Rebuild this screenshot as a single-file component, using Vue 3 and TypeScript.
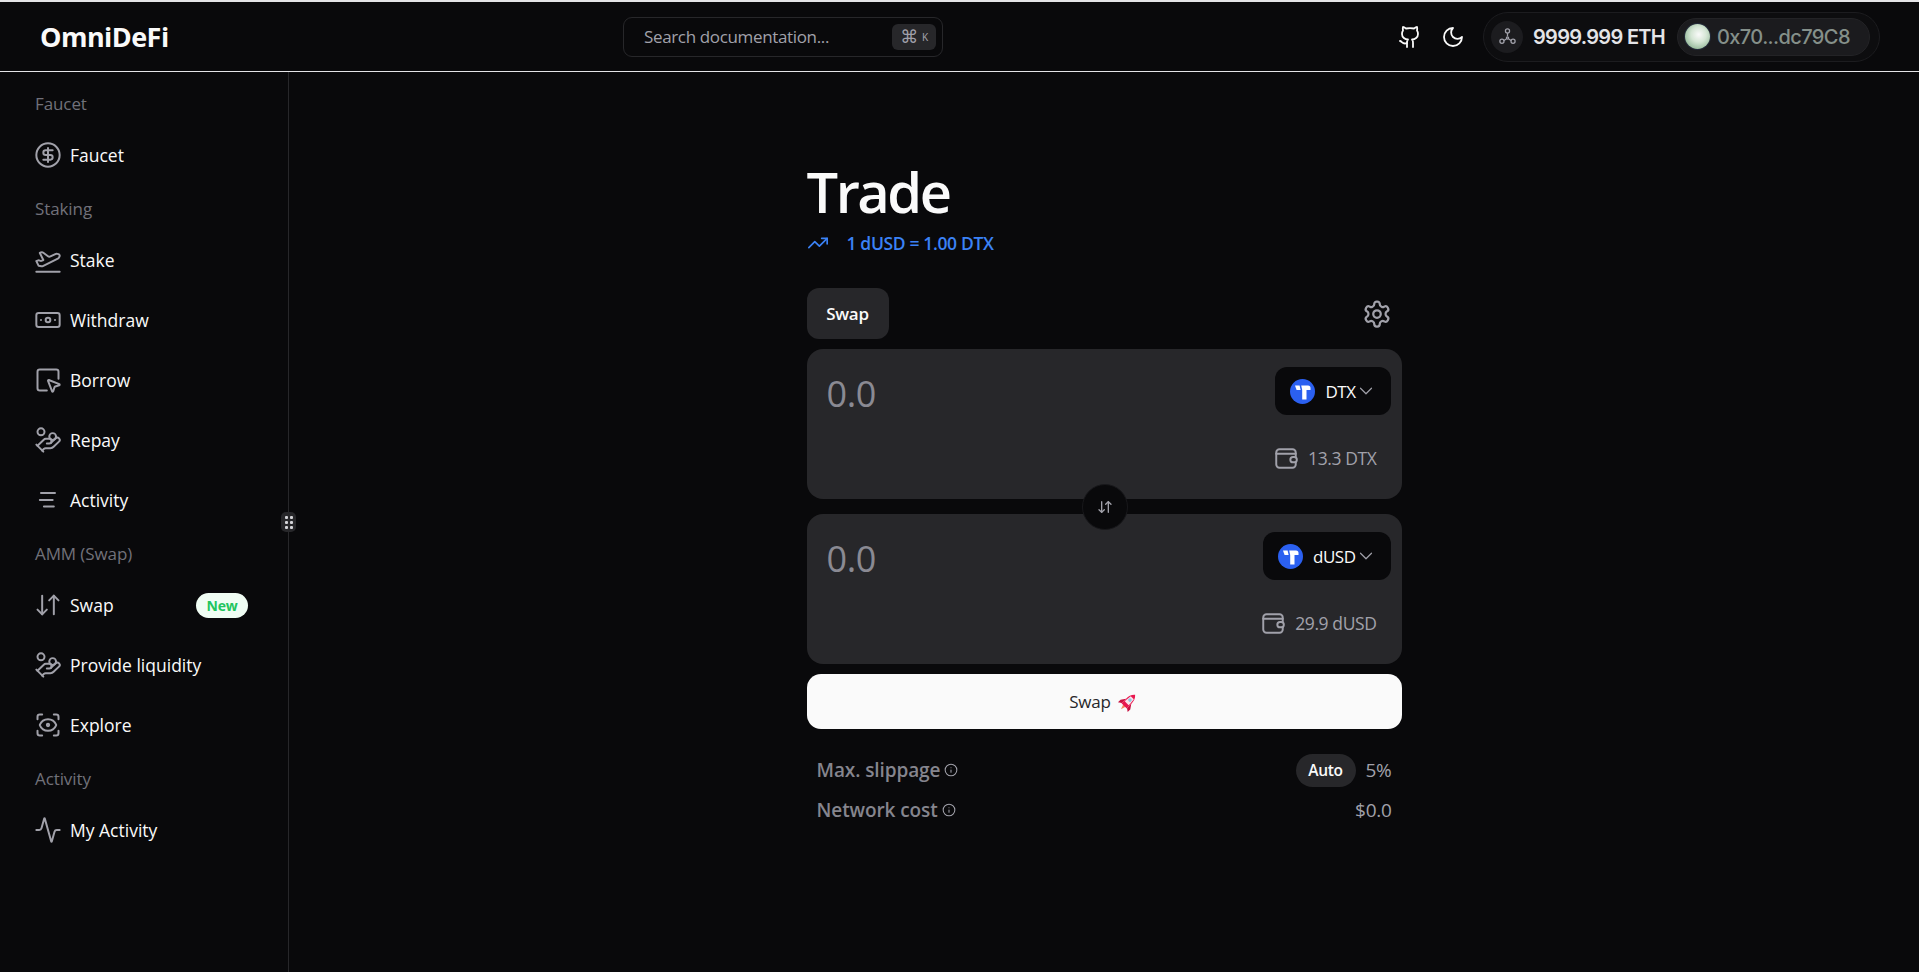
<script setup lang="ts">
type NavItem = { label: string; icon: string; badge?: string }
type NavGroup = { title: string; items: NavItem[] }

const groups: NavGroup[] = [
  { title: 'Faucet', items: [{ label: 'Faucet', icon: 'dollar' }] },
  {
    title: 'Staking',
    items: [
      { label: 'Stake', icon: 'plane' },
      { label: 'Withdraw', icon: 'note' },
      { label: 'Borrow', icon: 'pointer' },
      { label: 'Repay', icon: 'hand' },
      { label: 'Activity', icon: 'lines' },
    ],
  },
  {
    title: 'AMM (Swap)',
    items: [
      { label: 'Swap', icon: 'swap', badge: 'New' },
      { label: 'Provide liquidity', icon: 'hand' },
      { label: 'Explore', icon: 'eye' },
    ],
  },
  { title: 'Activity', items: [{ label: 'My Activity', icon: 'pulse' }] },
]

const tokens = [
  { symbol: 'DTX', balance: '13.3 DTX' },
  { symbol: 'dUSD', balance: '29.9 dUSD' },
]
</script>

<template>
  <div class="page">
    <header class="topbar">
      <div class="logo">OmniDeFi</div>
      <div class="search">
        <span>Search documentation...</span>
        <kbd class="kbd"><span class="cmd">⌘</span><span class="k">K</span></kbd>
      </div>
      <div class="top-right">
        <svg class="top-icon" viewBox="0 0 24 24">
          <path d="M15 22v-4a4.8 4.8 0 0 0-1-3.5c3 0 6-2 6-5.5.08-1.25-.27-2.48-1-3.5.28-1.15.28-2.35 0-3.5 0 0-1 0-3 1.5-2.64-.5-5.36-.5-8 0C6 2 5 2 5 2c-.3 1.15-.3 2.35 0 3.5A5.403 5.403 0 0 0 4 9c0 3.5 3 5.5 6 5.5-.39.49-.68 1.05-.85 1.65-.17.6-.22 1.23-.15 1.85v4" />
          <path d="M9 18c-4.51 2-5-2-7-2" />
        </svg>
        <svg class="top-icon moon" viewBox="0 0 24 24">
          <path d="M12 3a6 6 0 0 0 9 9 9 9 0 1 1-9-9Z" />
        </svg>
        <div class="wallet-pill">
          <span class="chain">
            <svg viewBox="0 0 24 24" class="chain-icon">
              <circle cx="12" cy="5" r="2.6" />
              <circle cx="5" cy="18" r="2.6" />
              <circle cx="19" cy="18" r="2.6" />
              <path d="M12 8v3M7.5 17l2.5-1.5M16.5 17l-2.5-1.5" />
              <circle cx="12" cy="14" r="1.4" />
            </svg>
          </span>
          <span class="eth">9999.999 ETH</span>
          <span class="account">
            <span class="avatar"></span>
            <span class="address">0x70...dc79C8</span>
          </span>
        </div>
      </div>
    </header>

    <div class="body">
      <aside class="sidebar">
        <template v-for="group in groups" :key="group.title">
          <div class="group-title">{{ group.title }}</div>
          <a v-for="item in group.items" :key="item.label" class="nav-item">
            <svg class="nav-icon" viewBox="0 0 24 24">
              <template v-if="item.icon === 'dollar'">
                <circle cx="12" cy="12" r="10" />
                <path d="M16 8h-6a2 2 0 1 0 0 4h4a2 2 0 1 1 0 4H8" />
                <path d="M12 18V6" />
              </template>
              <template v-else-if="item.icon === 'plane'">
                <path d="M2 22h20" />
                <path d="M6.36 17.4 4 17l-2-4 1.1-.55a2 2 0 0 1 1.8 0l.17.1a2 2 0 0 0 1.8 0L8 12 5 6l.9-.45a2 2 0 0 1 2.09.2l4.02 3a2 2 0 0 0 2.1.2l4.19-2.06a2.41 2.41 0 0 1 1.73-.17L21 7a1.4 1.4 0 0 1 .87 1.99l-.38.76c-.23.46-.6.84-1.07 1.08L7.58 17.2a2 2 0 0 1-1.22.18Z" />
              </template>
              <template v-else-if="item.icon === 'note'">
                <rect x="2" y="6" width="20" height="12" rx="2" />
                <circle cx="12" cy="12" r="2" />
                <path d="M6 12h.01M18 12h.01" />
              </template>
              <template v-else-if="item.icon === 'pointer'">
                <path d="M12.034 12.681a.498.498 0 0 1 .647-.647l9 3.5a.5.5 0 0 1-.033.943l-3.444 1.068a1 1 0 0 0-.66.66l-1.067 3.443a.5.5 0 0 1-.943.033z" />
                <path d="M21 11V5a2 2 0 0 0-2-2H5a2 2 0 0 0-2 2v14a2 2 0 0 0 2 2h6" />
              </template>
              <template v-else-if="item.icon === 'hand'">
                <path d="M11 15h2a2 2 0 1 0 0-4h-3c-.6 0-1.1.2-1.4.6L3 17" />
                <path d="m7 21 1.6-1.4c.3-.4.8-.6 1.4-.6h4c1.1 0 2.1-.4 2.8-1.2l4.6-4.4a2 2 0 0 0-2.75-2.91l-4.2 3.9" />
                <path d="m2 16 6 6" />
                <circle cx="16" cy="9" r="2.9" />
                <circle cx="6" cy="5" r="3" />
              </template>
              <template v-else-if="item.icon === 'lines'">
                <path d="M6 6h12M5 12h11M8.5 17.5H17" />
              </template>
              <template v-else-if="item.icon === 'swap'">
                <path d="m3 16 4 4 4-4" />
                <path d="M7 20V4" />
                <path d="m21 8-4-4-4 4" />
                <path d="M17 4v16" />
              </template>
              <template v-else-if="item.icon === 'eye'">
                <path d="M3 7V5a2 2 0 0 1 2-2h2" />
                <path d="M17 3h2a2 2 0 0 1 2 2v2" />
                <path d="M21 17v2a2 2 0 0 1-2 2h-2" />
                <path d="M7 21H5a2 2 0 0 1-2-2v-2" />
                <circle cx="12" cy="12" r="1" />
                <path d="M18.944 12.33a1 1 0 0 0 0-.66 7.5 7.5 0 0 0-13.888 0 1 1 0 0 0 0 .66 7.5 7.5 0 0 0 13.888 0" />
              </template>
              <template v-else>
                <path d="M22 12h-2.48a2 2 0 0 0-1.93 1.46l-2.35 8.36a.25.25 0 0 1-.48 0L9.24 2.18a.25.25 0 0 0-.48 0l-2.35 8.36A2 2 0 0 1 4.49 12H2" />
              </template>
            </svg>
            <span class="nav-label">{{ item.label }}</span>
            <span v-if="item.badge" class="badge">{{ item.badge }}</span>
          </a>
        </template>
        <span class="handle">
          <i></i><i></i><i></i><i></i><i></i><i></i>
        </span>
      </aside>

      <main class="main">
        <div class="trade">
          <h1 class="title">Trade</h1>
          <div class="rate">
            <svg class="rate-icon" viewBox="0 0 24 24">
              <path d="M22 7 13.5 15.5 8.5 10.5 2 17" />
              <path d="M16 7h6v6" />
            </svg>
            <span>1 dUSD = 1.00 DTX</span>
          </div>

          <div class="tabs">
            <button class="tab">Swap</button>
            <svg class="gear" viewBox="0 0 24 24">
              <path d="M12.22 2h-.44a2 2 0 0 0-2 2v.18a2 2 0 0 1-1 1.73l-.43.25a2 2 0 0 1-2 0l-.15-.08a2 2 0 0 0-2.73.73l-.22.38a2 2 0 0 0 .73 2.73l.15.1a2 2 0 0 1 1 1.72v.51a2 2 0 0 1-1 1.74l-.15.09a2 2 0 0 0-.73 2.73l.22.38a2 2 0 0 0 2.73.73l.15-.08a2 2 0 0 1 2 0l.43.25a2 2 0 0 1 1 1.73V20a2 2 0 0 0 2 2h.44a2 2 0 0 0 2-2v-.18a2 2 0 0 1 1-1.73l.43-.25a2 2 0 0 1 2 0l.15.08a2 2 0 0 0 2.73-.73l.22-.39a2 2 0 0 0-.73-2.73l-.15-.08a2 2 0 0 1-1-1.74v-.5a2 2 0 0 1 1-1.74l.15-.09a2 2 0 0 0 .73-2.73l-.22-.38a2 2 0 0 0-2.73-.73l-.15.08a2 2 0 0 1-2 0l-.43-.25a2 2 0 0 1-1-1.73V4a2 2 0 0 0-2-2z" />
              <circle cx="12" cy="12" r="3" />
            </svg>
          </div>

          <div class="panels">
            <section v-for="token in tokens" :key="token.symbol" class="panel">
              <div class="panel-top">
                <span class="amount">0.0</span>
                <button class="token-btn">
                  <svg class="token-logo" viewBox="0 0 25 25">
                    <circle cx="12.5" cy="12.5" r="12.5" fill="#2b60f0" />
                    <path d="M5 6.5h4.6l1 4.5H6.6z" fill="#fff" />
                    <path d="M11.2 6.5H18a2.5 2.5 0 0 1 2.5 2.5v2h-4v9.5H12.2V11z" fill="#fff" />
                  </svg>
                  <span class="symbol">{{ token.symbol }}</span>
                  <svg class="chevron" viewBox="0 0 24 24"><path d="m6 9 6 6 6-6" /></svg>
                </button>
              </div>
              <div class="balance">
                <svg class="wallet-icon" viewBox="0 0 24 24">
                  <path d="M21 11V7a3 3 0 0 0-3-3H6a3 3 0 0 0-3 3v11a3 3 0 0 0 3 3h12a3 3 0 0 0 3-3v-2" />
                  <path d="M3 8h18" />
                  <rect x="16" y="11" width="6" height="5" rx="2.5" />
                </svg>
                <span>{{ token.balance }}</span>
              </div>
            </section>
            <button class="flip">
              <svg viewBox="0 0 24 24">
                <path d="m3 16 4 4 4-4" />
                <path d="M7 20V4" />
                <path d="m21 8-4-4-4 4" />
                <path d="M17 4v16" />
              </svg>
            </button>
          </div>

          <button class="swap-btn">
            <span>Swap</span>
            <svg class="rocket" viewBox="-2 -2 24 24">
              <g transform="rotate(45 10 10)">
                <path d="M8 15h4l-2 6z" fill="#f4845f" />
                <path d="M6 9 2.5 14v4L6 15.5zM14 9l3.5 5v4L14 15.5z" fill="#c8103f" />
                <path d="M10 -1C13 1.5 14 5 14 9v7H6V9C6 5 7 1.5 10 -1z" fill="#e8174f" />
                <path d="M7.6 3.4h4.8L13 9v3H7V9z" fill="#fbe4ea" />
                <circle cx="10" cy="7" r="1.9" fill="#8fc7e4" />
              </g>
            </svg>
          </button>

          <div class="info-rows">
            <div class="info-row">
              <span class="info-label">Max. slippage
                <svg class="info-icon" viewBox="0 0 24 24"><circle cx="12" cy="12" r="10" /><path d="M12 16v-4M12 8h.01" /></svg>
              </span>
              <span class="info-value"><span class="auto">Auto</span>5%</span>
            </div>
            <div class="info-row">
              <span class="info-label">Network cost
                <svg class="info-icon" viewBox="0 0 24 24"><circle cx="12" cy="12" r="10" /><path d="M12 16v-4M12 8h.01" /></svg>
              </span>
              <span class="info-value">$0.0</span>
            </div>
          </div>
        </div>
      </main>
    </div>
  </div>
</template>

<style>
html,
body {
  margin: 0;
  background: #09090b;
}
</style>

<style scoped>
.page {
  height: 972px;
  display: flex;
  flex-direction: column;
  overflow: hidden;
  background: #09090b;
  color: #fafafa;
  font-family: "Open Sans", "Noto Sans", sans-serif;
  border-top: 2px solid #e4e4e7;
  box-sizing: border-box;
}

svg {
  fill: none;
  stroke: currentColor;
  stroke-width: 2;
  stroke-linecap: round;
  stroke-linejoin: round;
  flex-shrink: 0;
}

.topbar {
  height: 69px;
  flex-shrink: 0;
  display: flex;
  align-items: center;
  border-bottom: 1px solid #e4e4e7;
  padding: 0 39px 0 40px;
  position: relative;
  justify-content: space-between;
}

.logo {
  font-size: 27px;
  font-weight: 700;
  letter-spacing: -0.55px;
  width: 583px;
}

.search {
  width: 320px;
  height: 40px;
  box-sizing: border-box;
  border: 1px solid #27272a;
  border-radius: 9px;
  display: flex;
  align-items: center;
  justify-content: space-between;
  padding: 0 6px 0 20px;
  font-size: 17px;
  color: #a1a1aa;
  letter-spacing: -0.35px;
}

.kbd {
  width: 44px;
  height: 26px;
  background: #27272a;
  border-radius: 6px;
  display: flex;
  align-items: center;
  justify-content: center;
  gap: 4px;
  font-family: "Noto Sans", "DejaVu Sans", sans-serif;
  color: #a1a1aa;
}

.cmd {
  font-family: "DejaVu Sans", sans-serif;
  font-size: 18px;
}

.k {
  font-size: 10px;
}

.top-right {
  display: flex;
  align-items: center;
  margin-left: auto;
}

.top-icon {
  width: 24px;
  height: 24px;
  stroke-width: 1.8;
  color: #fafafa;
  margin-right: 19px;
}

.top-icon.moon {
  margin-right: 18px;
}

.wallet-pill {
  width: 397px;
  height: 50px;
  box-sizing: border-box;
  border: 1px solid #1c1c1f;
  background: #0d0d0f;
  border-radius: 25px;
  display: flex;
  align-items: center;
  padding: 0 9px 0 7px;
}

.chain {
  width: 32px;
  height: 32px;
  border-radius: 50%;
  background: #1c1c1f;
  display: flex;
  align-items: center;
  justify-content: center;
  color: #a1a1aa;
}

.chain-icon {
  width: 19px;
  height: 19px;
  stroke-width: 1.6;
}

.eth {
  margin-left: 10px;
  font-family: Inter, sans-serif;
  font-size: 20px;
  font-weight: 600;
  letter-spacing: -0.7px;
  color: #e4e4e7;
}

.account {
  margin-left: auto;
  width: 193px;
  height: 38px;
  border-radius: 19px;
  background: #1b1b1e;
  border: 1px solid #232326;
  box-sizing: border-box;
  display: flex;
  align-items: center;
  padding-left: 7px;
}

.avatar {
  width: 25px;
  height: 25px;
  border-radius: 50%;
  background: radial-gradient(circle at 55% 42%, #fafafa 0%, #d5e6d5 38%, #6f9f78 100%);
  box-shadow: 0 0 0 1px #232a3a;
}

.address {
  margin-left: 7px;
  font-family: Inter, sans-serif;
  font-size: 20px;
  font-weight: 500;
  letter-spacing: -0.6px;
  color: #85908a;
}

.body {
  flex: 1;
  display: flex;
  min-height: 0;
}

.sidebar {
  width: 289px;
  flex-shrink: 0;
  box-sizing: border-box;
  border-right: 1px solid #27272a;
  padding: 14px 0 0 35px;
  position: relative;
}

.group-title {
  height: 36px;
  line-height: 36px;
  font-size: 17px;
  color: #71717a;
  letter-spacing: -0.1px;
  margin-bottom: 3px;
}

.nav-item {
  height: 60px;
  display: flex;
  align-items: center;
  padding-right: 40px;
  color: #fafafa;
}

.nav-item:has(+ .group-title) {
  margin-bottom: 6px;
}

.nav-icon {
  width: 28px;
  height: 28px;
  margin: 0 8px 0 -1px;
  color: #a1a1aa;
  stroke-width: 1.7;
}

.nav-label {
  font-size: 17.5px;
}

.badge {
  margin-left: auto;
  width: 52px;
  height: 25px;
  line-height: 25px;
  text-align: center;
  border-radius: 13px;
  background: #f0fdf4;
  color: #22c55e;
  font-size: 14px;
  font-weight: 700;
  letter-spacing: -0.2px;
}

.handle {
  position: absolute;
  right: -8px;
  top: 440px;
  width: 15px;
  height: 20px;
  background: #27272a;
  border-radius: 5px;
  display: grid;
  grid-template-columns: 3px 3px;
  grid-auto-rows: 3px;
  justify-content: center;
  align-content: center;
  gap: 2px;
}

.handle i {
  background: #d4d4d8;
  border-radius: 1px;
}

.main {
  flex: 1;
  display: flex;
  justify-content: center;
}

.trade {
  width: 595px;
  padding-top: 85px;
}

.title {
  margin: 0;
  font-size: 56px;
  line-height: 68px;
  font-weight: 600;
  letter-spacing: -2.5px;
}

.rate {
  display: flex;
  align-items: center;
  height: 24px;
  margin-top: 6px;
  color: #3b82f6;
  font-size: 17.5px;
  font-weight: 600;
  letter-spacing: -0.35px;
}

.rate-icon {
  width: 22px;
  height: 22px;
  stroke-width: 1.8;
  margin-right: 18px;
}

.tabs {
  display: flex;
  align-items: center;
  justify-content: space-between;
  margin-top: 33px;
  padding-right: 10px;
}

.tab {
  width: 82px;
  height: 51px;
  border: none;
  border-radius: 12px;
  background: #27272a;
  color: #fafafa;
  font-family: inherit;
  font-size: 17px;
  font-weight: 600;
  letter-spacing: -0.3px;
}

.gear {
  width: 30px;
  height: 30px;
  color: #a1a1aa;
  stroke-width: 1.8;
}

.panels {
  position: relative;
  display: flex;
  flex-direction: column;
  gap: 15px;
  margin-top: 10px;
}

.panel {
  height: 150px;
  box-sizing: border-box;
  background: #27272a;
  border-radius: 16px;
  padding: 18px 11px 0 20px;
}

.panel-top {
  display: flex;
  align-items: flex-start;
  justify-content: space-between;
}

.amount {
  margin-top: 4px;
  font-size: 36px;
  line-height: 46px;
  color: #8a8a93;
  letter-spacing: -0.4px;
}

.token-btn {
  height: 48px;
  padding: 0 14px 0 15px;
  display: flex;
  align-items: center;
  background: #09090b;
  border: none;
  border-radius: 12px;
  color: #fafafa;
  font-family: inherit;
}

.token-logo {
  width: 25px;
  height: 25px;
  stroke: none;
}

.symbol {
  margin-left: 10px;
  font-size: 17px;
  letter-spacing: -0.5px;
}

.chevron {
  width: 22px;
  height: 22px;
  margin-left: -1px;
  color: #a1a1aa;
  stroke-width: 1.3;
}

.balance {
  display: flex;
  align-items: center;
  justify-content: flex-end;
  margin-top: 28px;
  padding-right: 14px;
  color: #a1a1aa;
  font-size: 17.5px;
  font-weight: 500;
  letter-spacing: -0.4px;
}

.wallet-icon {
  width: 26px;
  height: 26px;
  stroke-width: 1.8;
  margin-right: 9px;
}

.flip {
  position: absolute;
  left: 275px;
  top: 135px;
  width: 46px;
  height: 46px;
  padding: 0;
  border-radius: 50%;
  border: 1px solid #18181b;
  background: #09090b;
  color: #a1a1aa;
  display: flex;
  align-items: center;
  justify-content: center;
}

.flip svg {
  width: 16px;
  height: 16px;
}

.swap-btn {
  width: 100%;
  height: 55px;
  margin-top: 10px;
  border: none;
  border-radius: 14px;
  background: #fafafa;
  color: #27272a;
  font-family: inherit;
  font-size: 17px;
  letter-spacing: -0.2px;
  display: flex;
  align-items: center;
  justify-content: center;
  gap: 6px;
}

.rocket {
  width: 22px;
  height: 22px;
  stroke: none;
}

.info-rows {
  margin-top: 21px;
  padding: 0 10px;
}

.info-row {
  height: 40px;
  display: flex;
  align-items: center;
  justify-content: space-between;
  color: #a1a1aa;
  font-size: 19px;
}

.info-label {
  display: flex;
  align-items: center;
  gap: 4px;
  font-weight: 600;
  letter-spacing: -0.1px;
  color: #85858e;
}

.info-icon {
  width: 14px;
  height: 14px;
  stroke-width: 1.8;
  color: #a1a1aa;
}

.info-value {
  display: flex;
  align-items: center;
  letter-spacing: -0.3px;
}

.auto {
  width: 60px;
  height: 33px;
  line-height: 33px;
  text-align: center;
  border-radius: 17px;
  background: #27272a;
  color: #fafafa;
  font-size: 15.5px;
  font-weight: 600;
  margin-right: 10px;
}
</style>
